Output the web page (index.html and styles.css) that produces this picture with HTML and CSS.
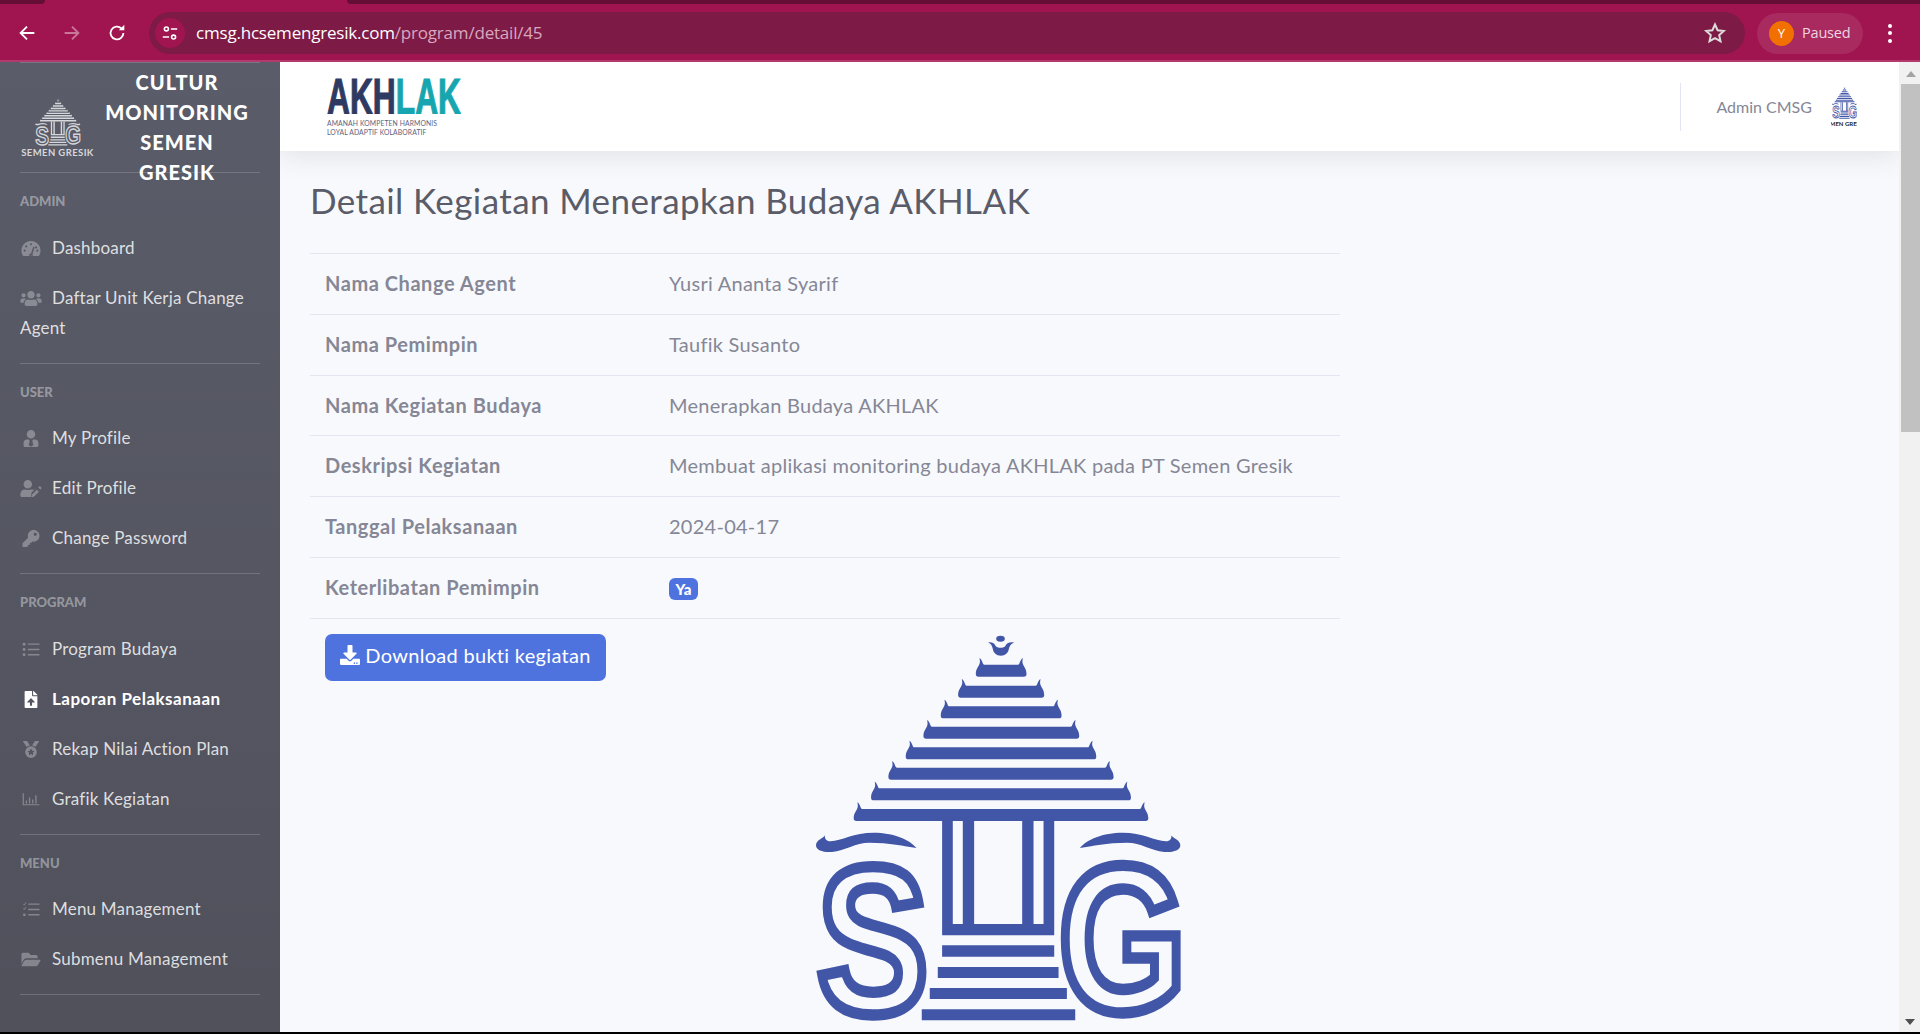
FILE: index.html
```html
<!DOCTYPE html>
<html lang="id">
<head>
<meta charset="utf-8">
<title>Detail Kegiatan</title>
<link rel="stylesheet" href="styles.css">
</head>
<body>
<svg class="sprite" xmlns="http://www.w3.org/2000/svg">
  <symbol id="sig" viewBox="100 40 1115 1170" preserveAspectRatio="none">
    <ellipse cx="659" cy="54" rx="13" ry="9"/>
    <path d="M622 65c12-2 20 4 22 10c5 8 25 8 30 0c2-6 10-12 26-10c-8 4-14 10-16 20c-2 12-10 20-24 20s-22-8-24-20c-2-10-6-16-14-20z"/>
    <path d="M611 132h100c7 0 5-14 15-20c-1 6-3 12 1 20c4 8 10 14 10 28q0 8-8 8h-136q-8 0-8-8c0-14 6-20 10-28c4-8 2-14 1-20c10 6 8 20 15 20z"/>
    <path d="M558 195h206c7 0 5-14 15-20c-1 6-3 12 1 20c4 8 10 14 10 28q0 8-8 8h-242q-8 0-8-8c0-14 6-20 10-28c4-8 2-14 1-20c10 6 8 20 15 20z"/>
    <path d="M506 257h310c7 0 5-14 15-20c-1 6-3 12 1 20c4 8 10 14 10 28q0 8-8 8h-346q-8 0-8-8c0-14 6-20 10-28c4-8 2-14 1-20c10 6 8 20 15 20z"/>
    <path d="M454 318h415c7 0 5-14 15-20c-1 6-3 12 1 20c4 8 10 14 10 28q0 8-8 8h-451q-8 0-8-8c0-14 6-20 10-28c4-8 2-14 1-20c10 6 8 20 15 20z"/>
    <path d="M401 380h519c7 0 5-14 15-20c-1 6-3 12 1 20c4 8 10 14 10 28q0 8-8 8h-555q-8 0-8-8c0-14 6-20 10-28c4-8 2-14 1-20c10 6 8 20 15 20z"/>
    <path d="M349 441h623c7 0 5-14 15-20c-1 6-3 12 1 20c4 8 10 14 10 28q0 8-8 8h-659q-8 0-8-8c0-14 6-20 10-28c4-8 2-14 1-20c10 6 8 20 15 20z"/>
    <path d="M297 503h727c7 0 5-14 15-20c-1 6-3 12 1 20c4 8 10 14 10 28q0 8-8 8h-763q-8 0-8-8c0-14 6-20 10-28c4-8 2-14 1-20c10 6 8 20 15 20z"/>
    <path d="M245 565h831c7 0 5-14 15-20c-1 6-3 12 1 20c4 8 10 14 10 28q0 8-8 8h-867q-8 0-8-8c0-14 6-20 10-28c4-8 2-14 1-20c10 6 8 20 15 20z"/>
    <path fill-rule="evenodd" d="M484 600h336v344H484zM516 600v310h30V600zM580 600v310h144V600zM758 600v310h30V600z"/>
    <path d="M484 974h336v34H484zM471 1039h362v33H471zM447 1102h411v33H447zM423 1166h460v33H423z"/>
    <path id="brow" d="M133 644c-6 10-27 14-27 30c0 16 24 22 48 20c40-4 70-28 112-28c60 0 104 10 141 16c-20-26-70-46-128-46c-60 0-96 24-130 26c-12 0-18-8-16-18z"/>
    <use href="#brow" transform="matrix(-1 0 0 1 1304 0)"/>
    <text class="logo-letter" transform="translate(109 1178) scale(.795 1)" font-size="630">S</text>
    <text class="logo-letter" transform="translate(833 1172) scale(.788 1)" font-size="625">G</text>
  </symbol>
  <symbol id="i-gauge" viewBox="0 0 576 512"><path d="M288 32C129 32 0 161 0 320c0 53 14 102 39 145c6 9 16 15 27 15h444c11 0 21-6 27-15c25-43 39-92 39-145C576 161 447 32 288 32zm0 64a32 32 0 1 1 0 64a32 32 0 0 1 0-64zM96 352a32 32 0 1 1 0-64a32 32 0 0 1 0 64zm48-128a32 32 0 1 1 0-64a32 32 0 0 1 0 64zm247 19l-61 183c14 11 22 28 22 46h-128c0-35 29-64 64-64h1l62-186c3-13 17-20 30-15c13 4 20 18 10 36zm17-19a32 32 0 1 1 65-1a32 32 0 0 1-65 1zm72 128a32 32 0 1 1 0-64a32 32 0 0 1 0 64z"/></symbol>
  <symbol id="i-users" viewBox="0 0 640 512"><path d="M96 224c35.3 0 64-28.7 64-64s-28.7-64-64-64-64 28.7-64 64 28.7 64 64 64zm448 0c35.3 0 64-28.7 64-64s-28.7-64-64-64-64 28.7-64 64 28.7 64 64 64zm32 32h-64c-17.6 0-33.5 7.1-45.1 18.6 40.3 22.1 68.9 62 75.1 109.4h66c17.7 0 32-14.3 32-32v-32c0-35.3-28.7-64-64-64zm-256 0c61.9 0 112-50.1 112-112S381.9 32 320 32 208 82.1 208 144s50.1 112 112 112zm76.8 32h-8.3c-20.8 10-43.9 16-68.5 16s-47.6-6-68.5-16h-8.3C179.6 288 128 339.6 128 403.2V432c0 26.5 21.5 48 48 48h288c26.5 0 48-21.5 48-48v-28.8c0-63.6-51.6-115.2-115.2-115.2zm-223.7-13.4C161.5 263.1 145.6 256 128 256H64c-35.3 0-64 28.7-64 64v32c0 17.7 14.3 32 32 32h65.9c6.3-47.4 34.9-87.3 75.2-109.4z"/></symbol>
  <symbol id="i-tie" viewBox="0 0 448 512"><path d="M224 256a128 128 0 1 0 0-256a128 128 0 0 0 0 256zM96 288C43 288 0 331 0 384v80c0 26 22 48 48 48h352c26 0 48-22 48-48v-80c0-53-43-96-96-96h-66l-24 40l32 120l-70 60l-70-60l32-120l-24-40z"/></symbol>
  <symbol id="i-useredit" viewBox="0 0 640 512"><path d="M224 256a128 128 0 1 0 0-256a128 128 0 0 0 0 256zm90 32h-17a174 174 0 0 1-146 0h-17C60 288 0 348 0 422v42c0 26 22 48 48 48h275c-5-13-6-28-3-42l14-72l4-18l142-142C443 311 385 288 314 288zM406 504l-63 13c-7 1-13-5-11-11l12-64l152-152l64 64zM625 264l-25 25l-64-64l25-25c12-12 32-12 44 0l20 20c12 12 12 32 0 44z"/></symbol>
  <symbol id="i-key" viewBox="0 0 512 512"><path d="M512 176.001C512 273.203 433.202 352 336 352c-11.22 0-22.19-1.062-32.827-3.069l-24.012 27.014A23.999 23.999 0 0 1 261.223 384H224v40c0 13.255-10.745 24-24 24h-40v40c0 13.255-10.745 24-24 24H24c-13.255 0-24-10.745-24-24v-78.059c0-6.365 2.529-12.47 7.029-16.971l161.802-161.802C163.108 213.814 160 195.271 160 176 160 78.798 238.797.001 335.999 0 433.488-.001 512 78.511 512 176.001zM336 128c0 26.51 21.49 48 48 48s48-21.49 48-48-21.49-48-48-48-48 21.49-48 48z"/></symbol>
  <symbol id="i-list" viewBox="0 0 512 512"><circle cx="48" cy="96" r="44"/><circle cx="48" cy="256" r="44"/><circle cx="48" cy="416" r="44"/><rect x="160" y="72" width="352" height="44" rx="12"/><rect x="160" y="234" width="352" height="44" rx="12"/><rect x="160" y="394" width="352" height="44" rx="12"/></symbol>
  <symbol id="i-file" viewBox="0 0 384 512"><path d="M224 136V0H24C11 0 0 11 0 24v464c0 13 11 24 24 24h336c13 0 24-11 24-24V160H248c-13 0-24-11-24-24zm65 212h-65v80c0 9-7 16-16 16h-32c-9 0-16-7-16-16v-80H95c-14 0-22-17-11-27l96-96c7-7 17-7 24 0l96 96c11 10 3 27-11 27zM377 105L279 7c-5-5-11-7-17-7h-6v128h128v-6c0-6-2-12-7-17z"/></symbol>
  <symbol id="i-medal" viewBox="0 0 512 512"><path d="M223 134L139 0H32C19 0 11 15 19 26l107 152c24-22 55-38 97-44zM480 0H373l-84 134c42 6 73 22 97 44L493 26c8-11 0-26-13-26zM256 160a176 176 0 1 0 0 352a176 176 0 0 0 0-352zm93 157l-38 37l9 53c2 9-8 16-16 11l-48-25l-48 25c-8 5-18-2-16-11l9-53l-38-37c-7-7-3-18 6-19l53-8l24-48c4-8 16-8 20 0l24 48l53 8c9 1 13 12 6 19z"/></symbol>
  <symbol id="i-chart" viewBox="0 0 512 512"><path d="M500 400H40V72c0-5-4-8-8-8H12c-5 0-8 3-8 8v344c0 9 7 16 16 16h480c5 0 8-4 8-8v-16c0-5-3-8-8-8zM128 288h-24c-4 0-8 4-8 8v72c0 4 4 8 8 8h24c4 0 8-4 8-8v-72c0-4-4-8-8-8zm96-96h-24c-4 0-8 4-8 8v168c0 4 4 8 8 8h24c4 0 8-4 8-8V200c0-4-4-8-8-8zm96 64h-24c-4 0-8 4-8 8v104c0 4 4 8 8 8h24c4 0 8-4 8-8V264c0-4-4-8-8-8zm96-128h-24c-4 0-8 4-8 8v232c0 4 4 8 8 8h24c4 0 8-4 8-8V136c0-4-4-8-8-8z"/></symbol>
  <symbol id="i-tasks" viewBox="0 0 512 512"><path d="M20 100l30 32l70-76l-18-16l-52 56l-12-14zM20 240l30 32l70-76l-18-16l-52 56l-12-14z"/><circle cx="56" cy="416" r="42"/><rect x="172" y="72" width="340" height="44" rx="10"/><rect x="172" y="234" width="340" height="44" rx="10"/><rect x="172" y="394" width="340" height="44" rx="10"/></symbol>
  <symbol id="i-folder" viewBox="0 0 576 512"><path d="M572 292l-72 123c-17 29-49 47-83 47H18c-14 0-23-16-16-28l72-123c17-29 49-47 83-47h399c14 0 23 16 16 28zM157 216h331v-48c0-26-22-48-48-48H280l-64-64H48C22 56 0 78 0 104v278l69-119c23-39 66-47 88-47z"/></symbol>
  <symbol id="i-download" viewBox="0 0 512 512"><path d="M216 0h80c13.3 0 24 10.7 24 24v168h87.7c17.8 0 26.7 21.5 14.1 34.1L269.7 378.3c-7.5 7.5-19.8 7.5-27.3 0L90.1 226.1c-12.6-12.6-3.7-34.1 14.1-34.1H192V24c0-13.3 10.7-24 24-24zm296 376v112c0 13.3-10.7 24-24 24H24c-13.3 0-24-10.7-24-24V376c0-13.3 10.7-24 24-24h146.7l49 49c20.1 20.1 52.5 20.1 72.6 0l49-49H488c13.3 0 24 10.7 24 24zm-124 88c0-11-9-20-20-20s-20 9-20 20 9 20 20 20 20-9 20-20zm64 0c0-11-9-20-20-20s-20 9-20 20 9 20 20 20 20-9 20-20z"/></symbol>
</svg>

<header class="chrome">
  <div class="tabstrip"><span class="tab-gap-left"></span><span class="tab-active"></span><span class="tab-gap-right"></span></div>
  <div class="toolbar">
    <svg class="tb-icon" viewBox="0 0 24 24"><path d="M20 12H5M12 5l-7 7l7 7" class="tb-stroke"/></svg>
    <svg class="tb-icon tb-dim" viewBox="0 0 24 24"><path d="M4 12h15M12 5l7 7l-7 7" class="tb-stroke"/></svg>
    <svg class="tb-icon" viewBox="0 0 24 24"><path d="M19 12a7 7 0 1 1-2.2-5.1" class="tb-stroke"/><path d="M20 3v6h-6z" class="tb-fill"/></svg>
    <div class="omnibox">
      <span class="site-chip"><svg class="chip-icon" viewBox="0 0 20 20"><circle cx="6" cy="5.5" r="2.2" class="chip-line"/><path d="M11 5.5h7M2 14.500h7" class="chip-line"/><circle cx="14" cy="14.500" r="2.2" class="chip-line"/></svg></span>
      <span class="url"><span class="url-host">cmsg.hcsemengresik.com</span>/program/detail/45</span>
      <svg class="star" viewBox="0 0 24 24"><path d="M12 3.500l2.600 5.700l6.200.7l-4.600 4.200l1.300 6.100L12 17.100l-5.500 3.100l1.300-6.100l-4.600-4.200l6.200-.7z"/></svg>
    </div>
    <div class="profile-pill"><span class="profile-avatar">Y</span><span class="profile-text">Paused</span></div>
    <span class="kebab"><i></i><i></i><i></i></span>
  </div>
</header>

<div class="window">
  <aside class="sidebar">
    <hr class="side-hr side-hr-top">
    <div class="brand">
      <div class="brand-logo">
        <svg class="brand-mark"><use href="#sig"/></svg>
        <span class="brand-caption">SEMEN GRESIK</span>
      </div>
      <div class="brand-text">Cultur Monitoring Semen Gresik</div>
    </div>
    <hr class="side-hr side-hr-brand">

    <div class="side-heading">Admin</div>
    <a class="nav-link"><svg class="nav-icon"><use href="#i-gauge"/></svg>Dashboard</a>
    <a class="nav-link"><svg class="nav-icon"><use href="#i-users"/></svg>Daftar Unit Kerja Change Agent</a>
    <hr class="side-hr">

    <div class="side-heading">User</div>
    <a class="nav-link"><svg class="nav-icon"><use href="#i-tie"/></svg>My Profile</a>
    <a class="nav-link"><svg class="nav-icon"><use href="#i-useredit"/></svg>Edit Profile</a>
    <a class="nav-link"><svg class="nav-icon"><use href="#i-key"/></svg>Change Password</a>
    <hr class="side-hr">

    <div class="side-heading">Program</div>
    <a class="nav-link"><svg class="nav-icon"><use href="#i-list"/></svg>Program Budaya</a>
    <a class="nav-link nav-active"><svg class="nav-icon"><use href="#i-file"/></svg>Laporan Pelaksanaan</a>
    <a class="nav-link"><svg class="nav-icon"><use href="#i-medal"/></svg>Rekap Nilai Action Plan</a>
    <a class="nav-link"><svg class="nav-icon"><use href="#i-chart"/></svg>Grafik Kegiatan</a>
    <hr class="side-hr">

    <div class="side-heading">Menu</div>
    <a class="nav-link"><svg class="nav-icon"><use href="#i-tasks"/></svg>Menu Management</a>
    <a class="nav-link"><svg class="nav-icon"><use href="#i-folder"/></svg>Submenu Management</a>
    <hr class="side-hr">
  </aside>

  <main class="content">
    <nav class="topbar">
      <div class="akhlak">
        <svg class="akhlak-word" viewBox="0 0 134 36"><text x="0" y="36" textLength="134" lengthAdjust="spacingAndGlyphs" class="akhlak-text"><tspan class="akh">AKH</tspan><tspan class="lak">LAK</tspan></text></svg>
        <div class="akhlak-sub">AMANAH KOMPETEN HARMONIS<br>LOYAL ADAPTIF KOLABORATIF</div>
      </div>
      <div class="topbar-user">
        <span class="user-name">Admin CMSG</span>
        <span class="user-avatar"><svg class="user-mark"><use href="#sig"/></svg><span class="user-caption">SEMEN GRESIK</span></span>
      </div>
    </nav>

    <section class="page">
      <h1 class="page-title">Detail Kegiatan Menerapkan Budaya AKHLAK</h1>
      <table class="detail">
        <tr><th>Nama Change Agent</th><td>Yusri Ananta Syarif</td></tr>
        <tr><th>Nama Pemimpin</th><td>Taufik Susanto</td></tr>
        <tr><th>Nama Kegiatan Budaya</th><td>Menerapkan Budaya AKHLAK</td></tr>
        <tr><th>Deskripsi Kegiatan</th><td>Membuat aplikasi monitoring budaya AKHLAK pada PT Semen Gresik</td></tr>
        <tr><th>Tanggal Pelaksanaan</th><td>2024-04-17</td></tr>
        <tr><th>Keterlibatan Pemimpin</th><td><span class="badge">Ya</span></td></tr>
      </table>
      <div class="evidence">
        <a class="btn"><svg class="btn-icon"><use href="#i-download"/></svg>Download bukti kegiatan</a>
        <svg class="proof"><use href="#sig"/></svg>
      </div>
    </section>
  </main>

  <div class="scrollbar">
    <span class="arrow-up"></span>
    <span class="thumb"></span>
    <span class="arrow-down"></span>
  </div>
</div>
</body>
</html>
```
FILE: styles.css
```css
* { box-sizing: border-box; }
html, body { margin: 0; height: 100%; }
body {
  height: 1034px;
  overflow: hidden;
  background: #000;
  font-family: "Lato", "Noto Sans", sans-serif;
  font-size: 20px;
  line-height: 1.5;
  color: #858796;
}
.sprite { display: none; }

/* Browser chrome */
.chrome { height: 62px; background: #66102f; display: flex; flex-direction: column; }
.tabstrip { height: 4px; display: flex; background: #a0154f; flex: none; }
.tab-gap-left { width: 45px; background: #660f36; border-radius: 0 0 6px 0; }
.tab-active { width: 302px; }
.tab-gap-right { flex: 1; background: #660f36; border-radius: 0 0 0 6px; }
.toolbar {
  flex: 1;
  background: #a0154f;
  border-bottom: 2px solid #b23a6c;
  display: flex;
  align-items: center;
  padding: 2px 0 0 16px;
}
.tb-icon { width: 22px; height: 22px; margin-right: 23px; flex: none; }
.tb-stroke { fill: none; stroke: #fff; stroke-width: 2; }
.tb-fill { fill: #fff; }
.tb-dim { opacity: .42; }
.omnibox {
  margin-right: 12px;
  width: 1596px;
  margin-left: -2px;
  height: 42px;
  border-radius: 21px;
  background: #7d1a45;
  display: flex;
  align-items: center;
  padding: 0 18px 0 6px;
}
.site-chip {
  width: 30px;
  height: 30px;
  border-radius: 50%;
  background: #a0154f;
  display: flex;
  align-items: center;
  justify-content: center;
  flex: none;
}
.chip-icon { width: 18px; height: 18px; }
.chip-line { fill: none; stroke: #fff; stroke-width: 1.8; }
.url {
  margin-left: 11px;
  flex: 1;
  font-family: "Open Sans", "Noto Sans", sans-serif;
  font-size: 17px;
  letter-spacing: -.2px;
  color: #d9a7be;
}
.url-host { color: #fff; }
.star { width: 24px; height: 24px; fill: none; stroke: #dcdcdc; stroke-width: 2; flex: none; }
.profile-pill {
  width: 106px;
  height: 41px;
  border-radius: 21px;
  background: #a82a5f;
  display: flex;
  align-items: center;
  padding-left: 12px;
  gap: 8px;
  flex: none;
}
.profile-avatar {
  width: 25px;
  height: 25px;
  border-radius: 50%;
  background: #f27000;
  color: #fff;
  font: 13px/25px "Open Sans", sans-serif;
  text-align: center;
}
.profile-text { font: 14.5px/1 "Open Sans", sans-serif; color: #f0d5e1; letter-spacing: -.2px; }
.kebab { margin-left: 25px; display: flex; flex-direction: column; gap: 3.500px; }
.kebab i { display: block; width: 4px; height: 4px; border-radius: 50%; background: #fff; }

/* Window */
.window { height: 970px; display: flex; background: #f8f9fc; }
.sidebar {
  width: 280px;
  flex: none;
  height: 970px;
  overflow: hidden;
  background: linear-gradient(180deg, #5a5c69 0%, #50515b 100%);
  color: rgba(255, 255, 255, .82);
}
.side-hr { margin: 10px 20px 0; border: 0; border-top: 1px solid rgba(255, 255, 255, .17); }
.side-hr-top { margin-top: 0; }
.side-hr-brand { margin-top: 0; position: relative; }
.brand {
  height: 109px;
  display: flex;
  padding: 4px 0 0 20px;
  position: relative;
  z-index: 1;
}
.brand-logo { width: 75px; padding-top: 32px; flex: none; color: #d6d7da; }
.brand-mark { display: block; width: 46px; height: 47px; margin: 0 auto; fill: currentColor; }
.brand-caption {
  display: block;
  font-size: 9.500px;
  line-height: 14px;
  font-weight: 700;
  letter-spacing: .4px;
  white-space: nowrap;
  text-align: center;
}
.brand-text {
  width: 150px;
  margin-left: 7px;
  height: 120px;
  flex: none;
  font-weight: 900;
  color: #fff;
  letter-spacing: 1px;
  text-align: center;
  text-transform: uppercase;
  line-height: 30px;
}
.side-heading {
  padding: 0 20px;
  margin: 18px 0 11.500px;
  height: 20px;
  font-size: 13px;
  line-height: 20px;
  font-weight: 900;
  text-transform: uppercase;
  color: rgba(255, 255, 255, .4);
}
.nav-link {
  display: block;
  padding: 10px 20px;
  font-size: 17px;
  line-height: 30px;
  letter-spacing: .2px;
  color: rgba(255, 255, 255, .82);
}
.nav-icon {
  width: 22px;
  height: 17px;
  margin-right: 10px;
  vertical-align: -3px;
  fill: rgba(255, 255, 255, .3);
}
.nav-active { color: #fff; font-weight: 700; letter-spacing: .5px; }
.nav-active .nav-icon { fill: #fff; }

/* Content */
.content { flex: 1; min-width: 0; overflow: hidden; display: flex; flex-direction: column; }
.topbar {
  height: 89px;
  flex: none;
  background: #fff;
  box-shadow: 0 2px 30px rgba(58, 59, 69, .14);
  position: relative;
  z-index: 1;
  display: flex;
  justify-content: space-between;
  padding: 16px 0 0 47px;
}
.akhlak { width: 134px; }
.akhlak-word { display: block; width: 134px; height: 36px; }
.akhlak-text { font: 700 50px "Liberation Sans", sans-serif; stroke-width: 1.2px; }
.akh { fill: #2f3a63; stroke: #2f3a63; }
.lak { fill: #17a6b0; stroke: #17a6b0; }
.akhlak-sub {
  margin-top: 5px;
  font-size: 6.800px;
  line-height: 9px;
  letter-spacing: .1px;
  color: #5c6380;
  white-space: nowrap;
}
.topbar-user {
  margin-top: 5px;
  height: 48px;
  margin-right: 42px;
  padding-left: 35px;
  border-left: 1px solid #e3e6f0;
  display: flex;
  align-items: center;
  gap: 19px;
}
.user-name { font-size: 16px; color: #858796; }
.user-avatar { width: 26px; display: block; overflow: hidden; color: #4256a8; }
.user-mark { display: block; width: 25px; height: 32px; fill: currentColor; margin: 0 auto; }
.user-caption {
  display: block;
  font-size: 6px;
  line-height: 9px;
  font-weight: 700;
  color: #222;
  white-space: nowrap;
  margin-left: -8px;
}
.page { padding: 28px 30px 0; flex: 1; overflow: hidden; }
.page-title {
  margin: 0 0 32px;
  font-size: 35px;
  line-height: 42px;
  font-weight: 400;
  letter-spacing: .4px;
  color: #5a5c69;
}
.detail { width: 1030px; border-collapse: collapse; letter-spacing: .26px; }
.detail th, .detail td {
  height: 60.800px;
  padding: 14px 15px 15px;
  border-top: 1px solid #e3e6f0;
  text-align: left;
  vertical-align: top;
}
.detail tr:last-child th, .detail tr:last-child td { border-bottom: 1px solid #e3e6f0; }
.detail th { width: 344px; font-weight: 700; letter-spacing: .55px; }
.badge {
  display: inline-block;
  width: 29px;
  height: 22px;
  margin-top: 6px;
  vertical-align: top;
  background: #4e73df;
  border-radius: 6px;
  color: #fff;
  font-size: 15px;
  font-weight: 900;
  line-height: 22px;
  text-align: center;
  letter-spacing: 0;
}
.evidence { display: flex; align-items: flex-start; padding: 15px 0 0 15px; }
.btn {
  width: 281px;
  height: 47px;
  padding-bottom: 4px;
  background: #4e73df;
  border-radius: 7px;
  color: #fff;
  display: flex;
  align-items: center;
  justify-content: center;
  gap: 5px;
  letter-spacing: .3px;
  flex: none;
}
.btn-icon { width: 20px; height: 20px; fill: #fff; }
.proof { width: 372px; height: 390px; margin-left: 208px; fill: #4256a8; color: #4256a8; flex: none; }
.logo-letter {
  font-family: "Liberation Sans", sans-serif;
  font-weight: 700;
  fill: none;
  stroke: currentColor;
  stroke-width: 34px;
}

/* Scrollbar */
.scrollbar { width: 21px; flex: none; background: #f1f1f1; position: relative; display: flex; flex-direction: column; align-items: flex-end; }
.arrow-up {
  margin: 9px 4px 0 0;
  border: 5px solid transparent;
  border-top: 0;
  border-bottom: 6px solid #a3a3a3;
  width: 0;
  height: 0;
}
.thumb { width: 19px; height: 348px; margin-top: 7px; background: #c1c1c1; }
.arrow-down {
  margin: auto 5px 7px 0;
  border: 5px solid transparent;
  border-bottom: 0;
  border-top: 6px solid #505050;
  width: 0;
  height: 0;
}
```
